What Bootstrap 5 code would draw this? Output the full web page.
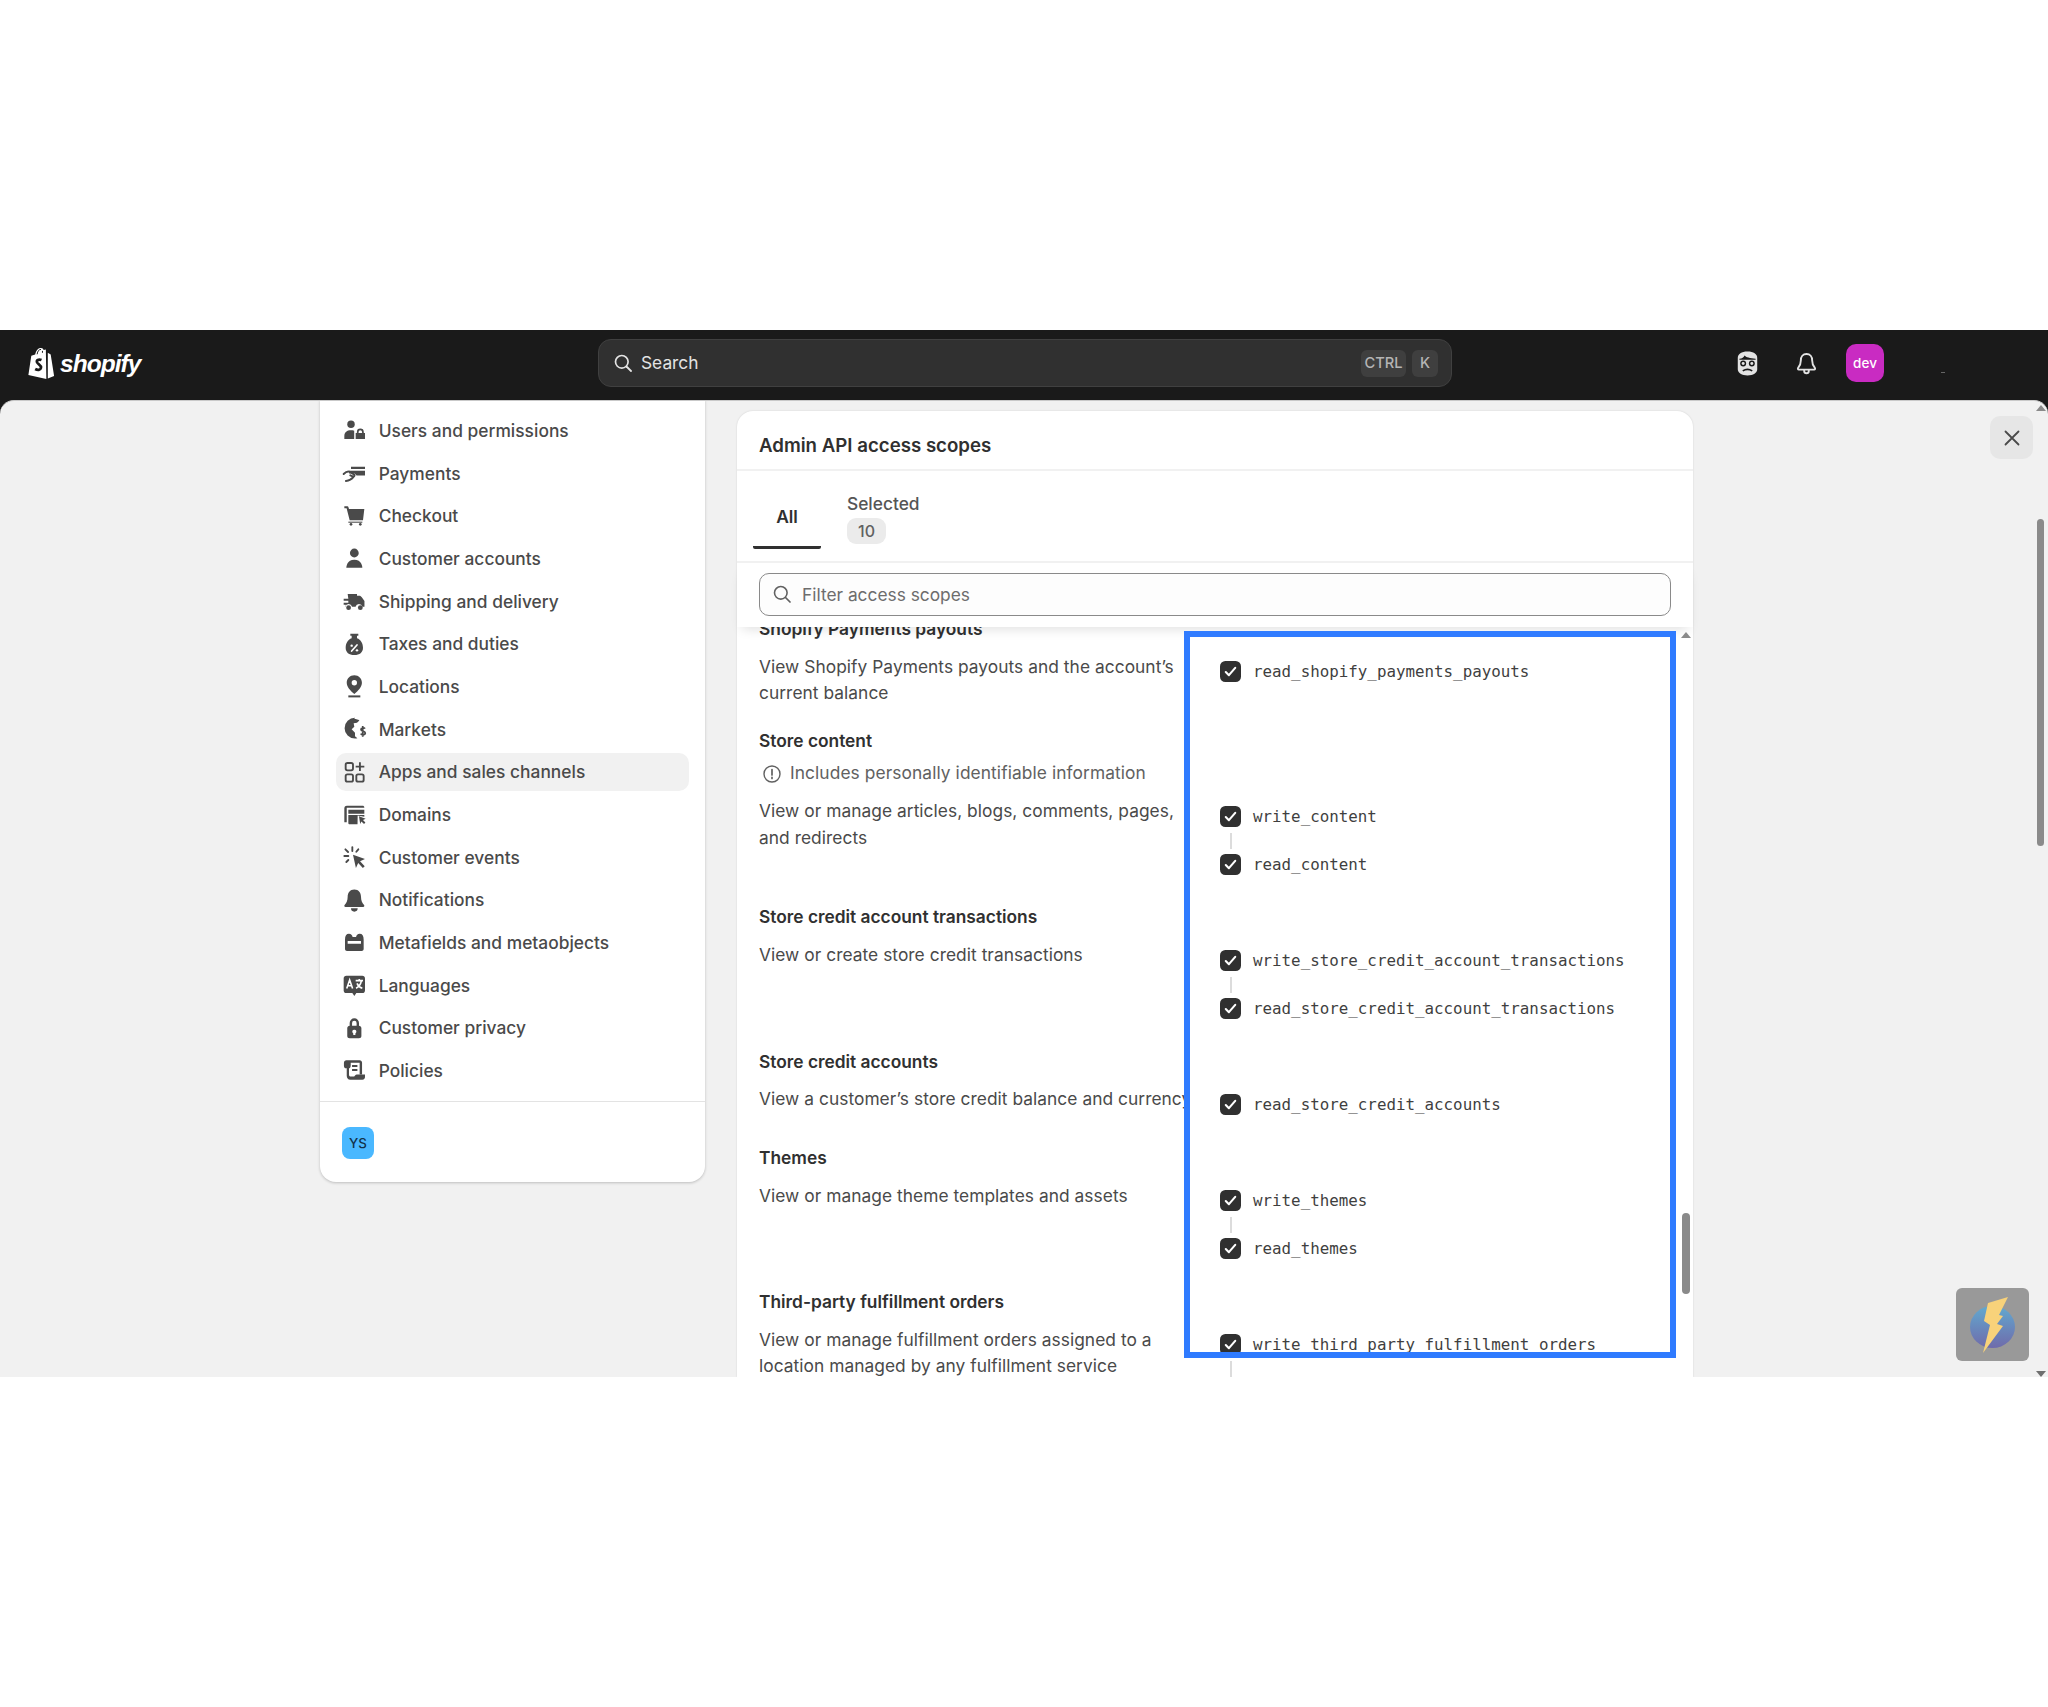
<!DOCTYPE html>
<html lang="en">
<head>
<meta charset="utf-8">
<title>Admin API access scopes</title>
<link href="https://cdn.jsdelivr.net/npm/bootstrap@5.3.0/dist/css/bootstrap.min.css" rel="stylesheet">
<style>
html,body{background:#fff;height:1707px;overflow:hidden}
body{font-family:Inter,"Liberation Sans",sans-serif;font-size:17.33px;line-height:26.67px;color:#303030}
.top-gap{height:330px}
.admin-shell{background:#1a1a1a;height:1046.6px}
.admin-top{height:70px;padding:0 0 4px}
.logo-wrap{width:598px;padding-left:27px;gap:5px;color:#fff}
.logo-word{font-family:"Liberation Sans",sans-serif;font-style:italic;font-weight:700;font-size:24.5px;letter-spacing:-.95px;line-height:30px;color:#fff;margin-top:2px}
.top-search{width:854px;height:48px;background:#303030;border:1px solid #404040;border-radius:13px;padding:0 13px 0 15px;color:#e3e3e3}
.top-search .lbl{margin-left:9px;flex:1}
.key-cap{height:27px;background:#3f3f3f;color:#b5b5b5;border-radius:6px;font-size:14.67px;line-height:27px;text-align:center;font-weight:500}
.cap-a{width:45px;margin-right:6px}.cap-b{width:26px}
.mask-ico{margin-left:282px}
.bell-ico{margin-left:32px}
.dev-chip{margin-left:26px;width:38px;height:38px;background:#c92bc2;color:#fff;border-radius:10px;font-size:13.5px;font-weight:500;line-height:38px;text-align:center}
.tiny-dash{width:4px;height:1px;background:#666;margin:19px 0 0 57px}
.gray-frame{position:relative;height:976.6px;background:#f1f1f1;border-radius:14px 14px 0 0;border-top:1px solid #c9c9c9;overflow:hidden;padding-left:320px;gap:32px}
.side-card{width:385px;border:0;border-radius:0 0 16px 16px;box-shadow:0 1px 3px rgba(0,0,0,.22);margin-top:-1px;height:782px;background:#fff}
.side-list{padding:12px 16px 12.3px;gap:5.33px}
.side-list .nav-link{height:37.33px;padding:0 0 0 5px;gap:11px;color:#4a4a4a;font-weight:500;font-size:17.33px;border-radius:10px;line-height:37.33px;letter-spacing:.03px}
.side-list .nav-link.is-here{background:#f1f1f1}
.side-ico{width:26.67px;height:26.67px;flex:none;fill:#4a4a4a}
.side-foot{border-top:1px solid #e3e3e3;padding:25px 22px 24px}
.ys-chip{width:32px;height:32px;background:#4ab8ff;color:#12324a;border-radius:8px;font-size:13.3px;line-height:32px;text-align:center;font-weight:500}
.scope-card{width:956px;margin-top:10px;border:0;border-radius:16px 16px 0 0;box-shadow:0 0 2px rgba(0,0,0,.14);background:#fff;min-height:0}
.scope-title{height:59.6px;padding:22px 22px 0;border-bottom:2px solid #f1f1f1;font-size:18.67px;font-weight:600;line-height:26px;color:#303030}
.tab-row{height:92.4px;padding-left:16px;border-bottom:2px solid #f1f1f1;gap:26px}
.tab-all{width:68px;height:78px;border-bottom:3px solid #303030;border-radius:0 0 2px 2px;font-weight:600;text-align:center;line-height:92px;color:#303030}
.tab-sel{padding-top:20.5px;font-weight:500;color:#555}
.count-pill{display:block;width:39px;height:26px;margin-top:0;border-radius:9px;background:#ebebeb;text-align:center;line-height:26px;color:#616161;font-size:16px}
.filter-zone{position:relative;z-index:2;height:64px;background:#fff;padding:10px 22px 0;box-shadow:0 7px 11px -5px rgba(0,0,0,.13)}
.filter-input{height:43px;border:1.5px solid #8a8a8a;border-radius:10px;background:#fdfdfd;padding:0 16px 0 42px;font-size:17.33px;font-family:inherit;color:#616161}
.filter-input::placeholder{color:#6d6d6d;opacity:1}
.filter-ico{position:absolute;left:36px;top:22px}
.scope-list{position:relative;flex:1 1 0;min-height:0;overflow:hidden;padding-left:22px}
.scope-block{padding-bottom:21.5px}
.scope-block:first-of-type{margin-top:-11.3px}
.scope-head{font-weight:600;height:26.67px;margin-bottom:11.3px;color:#303030}
.scope-head.with-note{margin-bottom:5.3px}
.note-row{height:26.67px;margin-bottom:11.3px;color:#616161;gap:8px;padding-left:3px;letter-spacing:.09px}
.desc-col{width:429px;flex:none;overflow:hidden;color:#4a4a4a;letter-spacing:.05px}
.desc-col span{white-space:nowrap}
.grant-col{padding:2.3px 0 2.3px 32px}
.grant-row{height:32px;gap:12px}
.grant-row .form-check-input{width:21px;height:21px;margin:0;flex:none;border:0;border-radius:5.33px;background-color:#303030;opacity:1}
.grant-row .form-check-input:checked[type=checkbox]{--bs-form-check-bg-image:url("data:image/svg+xml,%3csvg xmlns='http://www.w3.org/2000/svg' viewBox='0 0 20 20'%3e%3cpath fill='none' stroke='%23fff' stroke-linecap='round' stroke-linejoin='round' stroke-width='2' d='M5.500 10.500l3 3 6-7'/%3e%3c/svg%3e")}
.grant-code{font-family:"DejaVu Sans Mono","Liberation Mono",monospace;font-size:15.83px;color:#3f3f3f;line-height:32px;padding-top:1px}
.grant-link{width:2px;height:16px;margin-left:10px;background:#dcdcdc}
.blue-frame{position:absolute;left:447px;top:4px;width:491.5px;height:727px;border:6.5px solid #2f7bff;pointer-events:none;z-index:3}
.inner-bar{position:absolute;left:945px;top:586px;width:8px;height:81px;border-radius:4px;background:#8a8a8a;z-index:3}
.arrow-up,.arrow-dn{position:absolute;width:0;height:0;border-left:5px solid transparent;border-right:5px solid transparent}
.arrow-up{border-bottom:6.5px solid #8a8a8a}
.arrow-dn{border-top:6px solid #6f6f6f}
.inner-up{left:943.500px;top:5px;z-index:3}
.page-bar{position:absolute;right:4px;top:118px;width:7px;height:327px;border-radius:4px;background:#8a8a8a}
.page-up{right:2px;top:4px}
.page-dn{right:2px;top:970px}
.shut-btn{position:absolute;left:1990px;top:15px;width:43px;height:43px;border-radius:10px;background:#e6e6e6;border:0;padding:0}
.bolt-box{position:absolute;left:1956px;top:887px;width:73px;height:73px;background:#999;border-radius:6px}
</style>
</head>
<body>
<div class="top-gap"></div>
<div class="admin-shell">
  <nav class="navbar admin-top flex-nowrap justify-content-start align-items-center">
    <div class="logo-wrap d-flex align-items-center">
      <svg width="28" height="32" viewBox="0 0 28 33" aria-hidden="true"><path fill="#fff" d="M1 29 4 9l4-1.300C9 3 11.500 1 14 1c1.500 0 2.300 1 2.800 2l2.200-.3.500 30.300z"/><path fill="#fff" d="M21 6l3 1.700L27.500 30 21 32.500z"/><path fill="none" stroke="#1a1a1a" stroke-width="1" d="M10 7.500C10.500 4 12 2.500 14 2.500M15.500 6V4"/><path fill="none" stroke="#1a1a1a" stroke-width="2.800" d="M14.500 13.500c-3-1.300-5.500.2-4.500 2.500 1 2 4.500 2.500 4 5.500-.5 2.500-3.500 2.700-6 1.200"/></svg>
      <span class="logo-word">shopify</span>
    </div>
    <div class="top-search d-flex align-items-center">
      <svg width="18" height="18" viewBox="0 0 18 18" aria-hidden="true"><circle cx="7.800" cy="7.800" r="6.300" fill="none" stroke="#e3e3e3" stroke-width="1.700"/><path d="M12.500 12.500 17 17" stroke="#e3e3e3" stroke-width="1.800" stroke-linecap="round"/></svg>
      <span class="lbl">Search</span>
      <span class="key-cap cap-a">CTRL</span><span class="key-cap cap-b">K</span>
    </div>
    <svg class="mask-ico" width="27" height="27" viewBox="0 0 20 20" aria-hidden="true"><path fill="#e3e3e3" d="M2.800 6c0-3 2.700-4.800 7.200-4.800s7.200 1.800 7.200 4.800v8c0 3-3 4.800-7.200 4.800S2.800 17 2.800 14z"/><path fill="#1a1a1a" d="M4 6.500c2-.3 3.300-1.200 3.800-2.500 1 1.300 4 2 8.200 2.400v.8H4z"/><circle cx="6.800" cy="10" r="2.200" fill="#1a1a1a"/><circle cx="13.200" cy="10" r="2.200" fill="#1a1a1a"/><circle cx="6.800" cy="10" r="1.100" fill="#e3e3e3"/><circle cx="13.200" cy="10" r="1.100" fill="#e3e3e3"/><path d="M6.500 15.500c2-1.300 5-1.300 7 0" fill="none" stroke="#1a1a1a" stroke-width="1.200"/></svg>
    <svg class="bell-ico" width="27" height="27" viewBox="0 0 20 20" fill="none" stroke="#e3e3e3" stroke-width="1.400" stroke-linejoin="round" aria-hidden="true"><path d="M10 3c-2.700 0-4.200 2.200-4.200 4.700 0 2.600-.8 4.200-2 5.600-.4.500-.1 1.200.5 1.200h11.400c.6 0 .9-.7.500-1.200-1.200-1.400-2-3-2-5.600C14.200 5.200 12.700 3 10 3z"/><path d="M8.300 14.800v.7a1.700 1.700 0 0 0 3.400 0v-.7"/></svg>
    <div class="dev-chip">dev</div>
    <div class="tiny-dash"></div>
  </nav>

  <div class="gray-frame d-flex align-items-start">
    <div class="card side-card flex-none">
      <ul class="nav flex-column side-list">
        <li><a class="nav-link d-flex align-items-center" href="#"><svg class="side-ico" viewBox="0 0 20 20"><circle cx="7.500" cy="5.500" r="2.800"/><path d="M2.500 16.500v-2.300c0-2.700 2-4.200 5-4.200.9 0 1.700.1 2.400.4v6.100z"/><path fill-rule="evenodd" d="M11 16.500V12h.9v-.8a2.600 2.600 0 0 1 5.200 0v.8h.9v4.500zM13.200 12h2.600v-.8a1.300 1.300 0 0 0-2.600 0z"/></svg>Users and permissions</a></li>
        <li><a class="nav-link d-flex align-items-center" href="#"><svg class="side-ico" viewBox="0 0 20 20"><path d="M7.500 5H18v1.800H7.500zM6 8h12v3.700h-6.300l-1.400-1.500H6z"/><path fill="none" stroke="#4a4a4a" stroke-width="1.500" stroke-linecap="round" d="M2 10.500C4 8.500 6 8 8 9.700l2 1.300c.5 1-.5 1.700-1.300 1.300L7 11.500M9.500 12.500C8 14.500 6.500 15.500 3.700 15.700"/></svg>Payments</a></li>
        <li><a class="nav-link d-flex align-items-center" href="#"><svg class="side-ico" viewBox="0 0 20 20"><path d="M2.500 2.500h2.300c.4 0 .7.300.8.600L6 4.500h11.500l-1 8.500H6.500L4.200 4H2.500z"/><circle cx="7.500" cy="16" r="1"/><circle cx="14.500" cy="16" r="1"/><path d="M5.500 14H16v.8H5.500z"/></svg>Checkout</a></li>
        <li><a class="nav-link d-flex align-items-center" href="#"><svg class="side-ico" viewBox="0 0 20 20"><circle cx="10" cy="6" r="3.300"/><path d="M4 17c0-1 .5-6 6-6s6 5 6 6z"/></svg>Customer accounts</a></li>
        <li><a class="nav-link d-flex align-items-center" href="#"><svg class="side-ico" viewBox="0 0 20 20"><path d="M5 4.500h7v1.300h1.600c1 0 1.500.5 2 1.200l2 2.800V14h-1.500a2.700 2.700 0 0 0-5.200 0H8.300a2.700 2.700 0 0 0-5.200 0H3.500v-1.500h-1.500V11h3.500V9.500h-3.500V8h3.500z"/><circle cx="5.700" cy="14.800" r="1.800"/><circle cx="14.500" cy="14.800" r="1.800"/></svg>Shipping and delivery</a></li>
        <li><a class="nav-link d-flex align-items-center" href="#"><svg class="side-ico" viewBox="0 0 20 20"><path d="M7 2h6v1.500h-1v2c3 1 4.500 4 4.500 7 0 3.500-2.500 5.500-6.500 5.500s-6.500-2-6.500-5.500c0-3 1.500-6 4.500-7v-2H7z"/><path stroke="#fff" stroke-width="1.300" stroke-linecap="round" d="M12 10.500l-4 4.500"/><circle cx="8" cy="11" r=".9" fill="#fff"/><circle cx="12" cy="14.500" r=".9" fill="#fff"/></svg>Taxes and duties</a></li>
        <li><a class="nav-link d-flex align-items-center" href="#"><svg class="side-ico" viewBox="0 0 20 20"><path fill-rule="evenodd" d="M10 1.700c3.300 0 5.700 2.500 5.700 5.600 0 3-2.700 6-5.700 8.500-3-2.500-5.700-5.500-5.700-8.500 0-3.100 2.400-5.600 5.700-5.600zm0 3.600a2 2 0 1 0 0 4 2 2 0 0 0 0-4z"/><path d="M5.500 16.800h9v1.500h-9z"/></svg>Locations</a></li>
        <li><a class="nav-link d-flex align-items-center" href="#"><svg class="side-ico" viewBox="0 0 20 20"><path d="M10 2.300c1.500 0 2.800.4 3.800 1.100L12 5l-2.500.5.500 2.500-2 2 2.500 2.500v2.700l1.800 1.500c-.7.200-1.200.2-1.800.2a7.800 7.800 0 0 1 0-15.600z"/><path fill="none" stroke="#4a4a4a" stroke-width="1.300" d="M18 9.500c-.5-.9-3-1-3 .6s3.200 1 3.200 2.700-2.700 1.600-3.400.4M16.300 7.500v8"/></svg>Markets</a></li>
        <li><a class="nav-link is-here d-flex align-items-center" href="#"><svg class="side-ico" viewBox="0 0 20 20" style="fill:none" stroke="#4a4a4a" stroke-width="1.400"><rect x="3.500" y="3" width="5.500" height="5.500" rx="1.300"/><rect x="3.500" y="11.500" width="5.500" height="5.500" rx="1.300"/><rect x="11.500" y="11.500" width="5.500" height="5.500" rx="1.300"/><path d="M14.200 2.500v6.500M11 5.700h6.500"/></svg>Apps and sales channels</a></li>
        <li><a class="nav-link d-flex align-items-center" href="#"><svg class="side-ico" viewBox="0 0 20 20"><path d="M2.500 5.500c0-1 .5-2 2-2H16c1 0 1.500.5 1.500 1.500H4.300v11H2.500z"/><path fill-rule="evenodd" d="M5.500 6.500h12v3h-12zm0 4h12v1.300l-5-1-.1 6.700H6.500c-.6 0-1-.4-1-1z"/><path d="M13.500 11.500l5 1.800-2 .9 1.800 2-1 1-2-1.900-.9 2z"/></svg>Domains</a></li>
        <li><a class="nav-link d-flex align-items-center" href="#"><svg class="side-ico" viewBox="0 0 20 20"><path d="M9 8l9 3.300-3.700 1.700 3.500 3.700-1.400 1.300-3.500-3.700-1.700 3.700z"/><path fill="none" stroke="#4a4a4a" stroke-width="1.400" stroke-linecap="round" d="M8.500 2.300v3M3.300 4l2 2M2.500 9h3M4 13.500l1.500-1.500M13 4l-1.500 1.800"/></svg>Customer events</a></li>
        <li><a class="nav-link d-flex align-items-center" href="#"><svg class="side-ico" viewBox="0 0 20 20"><path d="M10 1.800c-3.300 0-5 2.700-5 5.500 0 3-1 4.800-2.300 6.200-.5.600-.2 1.500.7 1.500h13.200c.9 0 1.200-.9.700-1.500C16 12.100 15 10.300 15 7.300c0-2.800-1.700-5.500-5-5.500z"/><path d="M7.500 16h5a2.500 2.500 0 0 1-5 0z"/></svg>Notifications</a></li>
        <li><a class="nav-link d-flex align-items-center" href="#"><svg class="side-ico" viewBox="0 0 20 20"><path fill-rule="evenodd" d="M3 8c0-3 1-4.500 3-4.500 1.500 0 2.500 1 2.700 2.500h2.600C11.500 4.500 12.500 3.500 14 3.500c2 0 3 1.500 3 4.500v7c0 1-.7 1.500-1.500 1.500h-11C3.700 16.500 3 16 3 15zM5 9v2h10V9z"/></svg>Metafields and metaobjects</a></li>
        <li><a class="nav-link d-flex align-items-center" href="#"><svg class="side-ico" viewBox="0 0 20 20"><path d="M4 2.800h12c1.200 0 2 .8 2 2v9c0 1.200-.8 2-2 2h-4.500L10 18l-1.500-2.200H4c-1.200 0-2-.8-2-2v-9c0-1.200.8-2 2-2z"/><path fill="none" stroke="#fff" stroke-width="1.200" d="M4.300 12.300 6.500 6l2.200 6.300M5.200 10.300h2.600M11 6.500h5.500M13.700 5.300v1.200M15.300 6.700c-.5 2.500-2 4.500-4 5.500M12 8.500c.7 1.700 2.200 3 4 3.700"/></svg>Languages</a></li>
        <li><a class="nav-link d-flex align-items-center" href="#"><svg class="side-ico" viewBox="0 0 20 20"><path fill-rule="evenodd" d="M6.500 8V6a3.500 3.500 0 0 1 7 0v2c1 0 1.800.8 1.800 1.800v6c0 1-.8 1.700-1.800 1.700h-7c-1 0-1.800-.7-1.800-1.700v-6C4.700 8.800 5.500 8 6.500 8zm1.800 0h3.400V6a1.700 1.700 0 0 0-3.400 0zm1.700 3a1.500 1.500 0 0 0-.8 2.800V15h1.600v-1.200A1.500 1.500 0 0 0 10 11z"/></svg>Customer privacy</a></li>
        <li><a class="nav-link d-flex align-items-center" href="#"><svg class="side-ico" viewBox="0 0 20 20"><path fill-rule="evenodd" d="M4 2.500h10c1 0 1.800.8 1.800 1.800V13H14V4.300H7.300V5.500c0 1 .1 2.500-.9 3H6V13c0 .9.200 1.700.9 1.700h3c.9-1.300 1.600-1.500 2.600-1.500H18V15c0 1-.6 2-2 2H7c-1.800 0-2.700-1.300-2.700-3V8.500H4c-1.200 0-1.800-.8-1.800-2V4.300c0-1 .8-1.800 1.800-1.800z"/><path d="M8.300 6h4v1.500h-4zM8.300 9h4v1.500h-4z"/></svg>Policies</a></li>
      </ul>
      <div class="side-foot"><div class="ys-chip">YS</div></div>
    </div>

    <div class="card scope-card align-self-stretch flex-none">
      <div class="scope-title">Admin API access scopes</div>
      <div class="tab-row d-flex align-items-start">
        <div class="tab-all">All</div>
        <div class="tab-sel">Selected<span class="count-pill">10</span></div>
      </div>
      <div class="filter-zone">
        <svg class="filter-ico" width="18" height="18" viewBox="0 0 18 18" aria-hidden="true"><circle cx="7.800" cy="7.800" r="6.300" fill="none" stroke="#616161" stroke-width="1.600"/><path d="M12.500 12.500 17 17" stroke="#616161" stroke-width="1.700" stroke-linecap="round"/></svg>
        <input class="form-control filter-input" type="text" placeholder="Filter access scopes">
      </div>
      <div class="scope-list">
        <section class="scope-block">
          <div class="scope-head">Shopify Payments payouts</div>
          <div class="d-flex">
            <div class="desc-col">View Shopify Payments payouts and the account’s<br>current balance</div>
            <div class="grant-col">
              <div class="grant-row d-flex align-items-center"><input class="form-check-input" type="checkbox" checked><span class="grant-code">read_shopify_payments_payouts</span></div>
            </div>
          </div>
        </section>
        <section class="scope-block">
          <div class="scope-head with-note">Store content</div>
          <div class="note-row d-flex align-items-center"><svg width="20" height="20" viewBox="0 0 20 20" fill="none" stroke="#616161" stroke-width="1.400" aria-hidden="true"><circle cx="10" cy="10" r="8"/><path d="M10 5.500v5.500M10 13.300v1.200" stroke-width="1.700" stroke-linecap="round"/></svg>Includes personally identifiable information</div>
          <div class="d-flex">
            <div class="desc-col">View or manage articles, blogs, comments, pages,<br>and redirects</div>
            <div class="grant-col">
              <div class="grant-row d-flex align-items-center"><input class="form-check-input" type="checkbox" checked><span class="grant-code">write_content</span></div>
              <div class="grant-link"></div>
              <div class="grant-row d-flex align-items-center"><input class="form-check-input" type="checkbox" checked><span class="grant-code">read_content</span></div>
            </div>
          </div>
        </section>
        <section class="scope-block">
          <div class="scope-head">Store credit account transactions</div>
          <div class="d-flex">
            <div class="desc-col">View or create store credit transactions</div>
            <div class="grant-col">
              <div class="grant-row d-flex align-items-center"><input class="form-check-input" type="checkbox" checked><span class="grant-code">write_store_credit_account_transactions</span></div>
              <div class="grant-link"></div>
              <div class="grant-row d-flex align-items-center"><input class="form-check-input" type="checkbox" checked><span class="grant-code">read_store_credit_account_transactions</span></div>
            </div>
          </div>
        </section>
        <section class="scope-block">
          <div class="scope-head">Store credit accounts</div>
          <div class="d-flex">
            <div class="desc-col"><span>View a customer’s store credit balance and currency</span></div>
            <div class="grant-col">
              <div class="grant-row d-flex align-items-center"><input class="form-check-input" type="checkbox" checked><span class="grant-code">read_store_credit_accounts</span></div>
            </div>
          </div>
        </section>
        <section class="scope-block">
          <div class="scope-head">Themes</div>
          <div class="d-flex">
            <div class="desc-col">View or manage theme templates and assets</div>
            <div class="grant-col">
              <div class="grant-row d-flex align-items-center"><input class="form-check-input" type="checkbox" checked><span class="grant-code">write_themes</span></div>
              <div class="grant-link"></div>
              <div class="grant-row d-flex align-items-center"><input class="form-check-input" type="checkbox" checked><span class="grant-code">read_themes</span></div>
            </div>
          </div>
        </section>
        <section class="scope-block">
          <div class="scope-head">Third-party fulfillment orders</div>
          <div class="d-flex">
            <div class="desc-col">View or manage fulfillment orders assigned to a<br>location managed by any fulfillment service</div>
            <div class="grant-col">
              <div class="grant-row d-flex align-items-center"><input class="form-check-input" type="checkbox" checked><span class="grant-code">write_third_party_fulfillment_orders</span></div>
              <div class="grant-link"></div>
            </div>
          </div>
        </section>
        <div class="blue-frame"></div>
        <div class="arrow-up inner-up"></div>
        <div class="inner-bar"></div>
      </div>
    </div>

    <div class="arrow-up page-up"></div>
    <div class="page-bar"></div>
    <div class="arrow-dn page-dn"></div>
    <button class="shut-btn d-flex align-items-center justify-content-center" type="button" aria-label="Close"><svg width="18" height="18" viewBox="0 0 18 18" aria-hidden="true"><path d="M2.500 2.500l13 13M15.500 2.500l-13 13" stroke="#4a4a4a" stroke-width="1.800" stroke-linecap="round"/></svg></button>
    <div class="bolt-box">
      <svg width="73" height="73" viewBox="0 0 73 73" aria-hidden="true"><defs><linearGradient id="orb" x1="0" y1="0" x2="0" y2="1"><stop offset="0" stop-color="#62a9cf"/><stop offset="1" stop-color="#6f6bab"/></linearGradient></defs><ellipse cx="36.500" cy="39" rx="22.500" ry="21" fill="url(#orb)"/><path fill="#f8d27a" d="M52 9 32 15l-4 18 6 4-7 28 20-27-6-2 6-8-4-1z"/></svg>
    </div>
  </div>
</div>
<script src="https://cdn.jsdelivr.net/npm/bootstrap@5.3.0/dist/js/bootstrap.bundle.min.js"></script>
</body>
</html>
